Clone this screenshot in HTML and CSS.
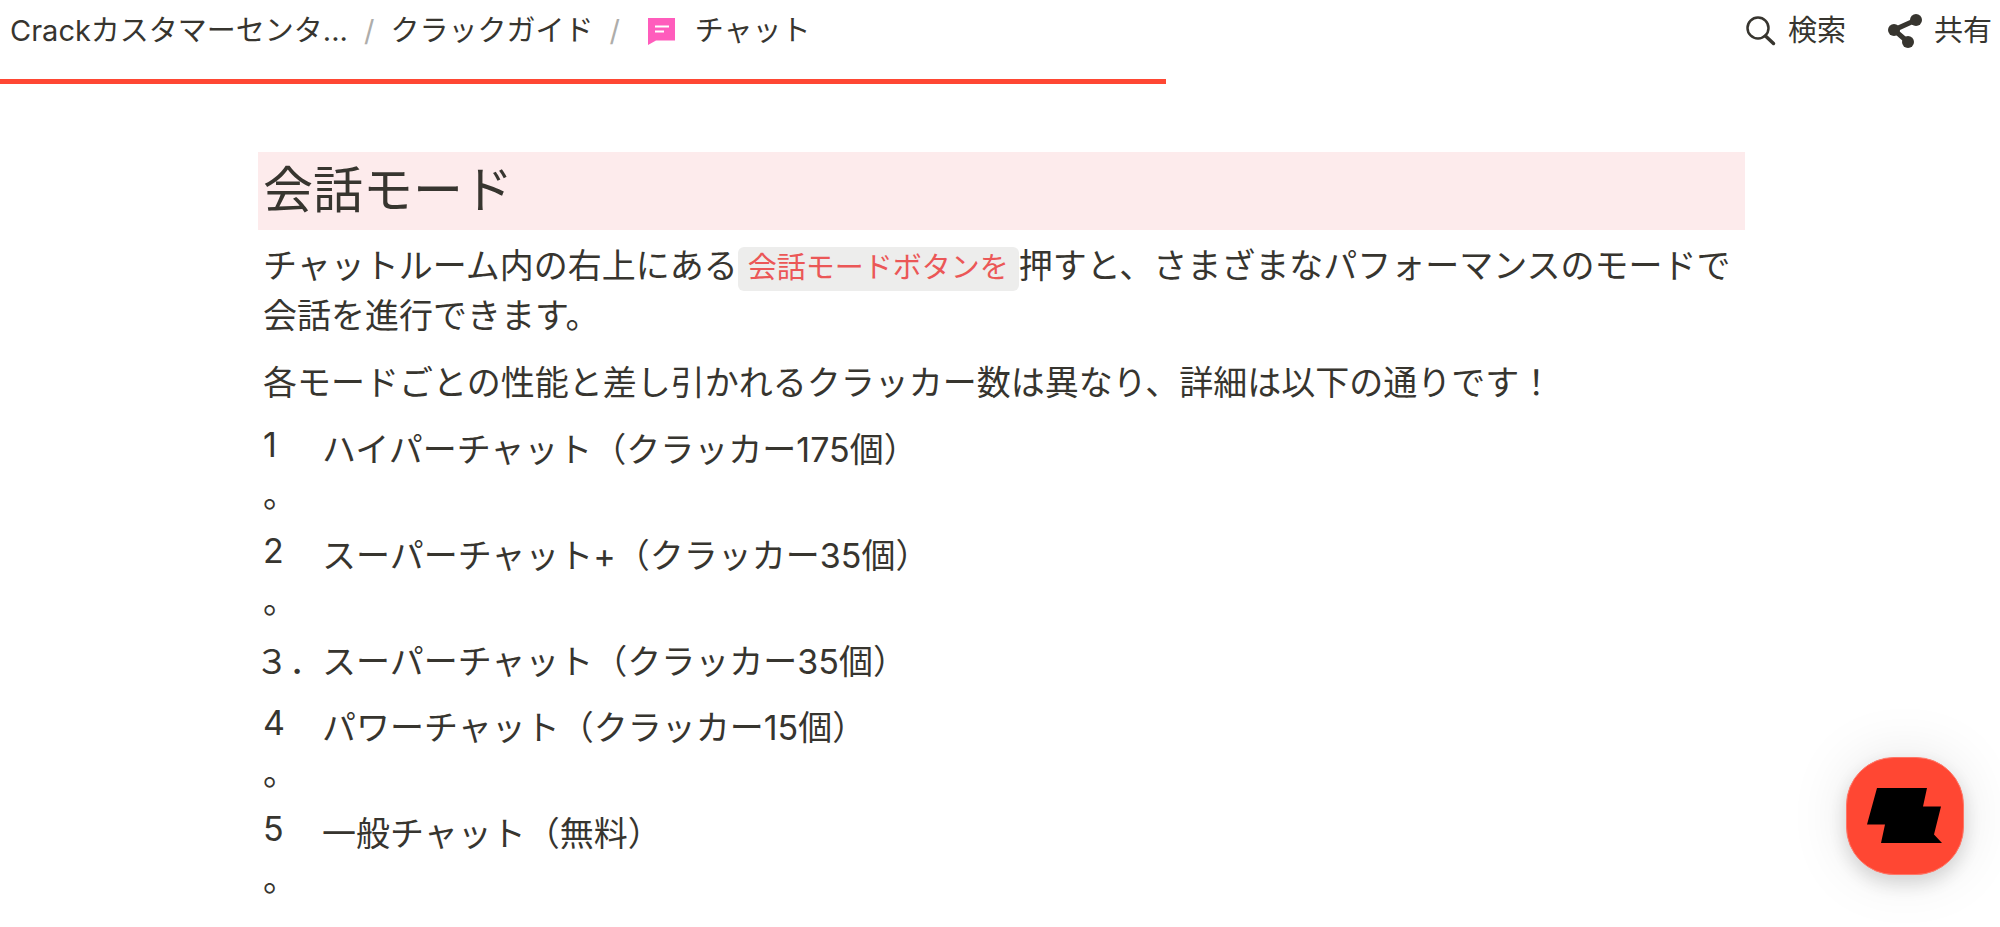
FILE: index.html
```html
<!DOCTYPE html>
<html lang="ja">
<head>
    <meta charset="UTF-8">
    <meta name="viewport" content="width=device-width, initial-scale=1">
    <title>チャット</title>
    <link rel="stylesheet" href="styles.css">
</head>
<body>
    <header class="topbar">
        <nav class="breadcrumb">
            <a href="#">Crackカスタマーセンタ...</a>
            <span class="slash">/</span>
            <a href="#">クラックガイド</a>
            <span class="slash">/</span>
            <a href="#" class="current">
                <svg class="icon-chat" viewBox="0 0 27 27"><path d="M0 0H27V22.500H8L0 27Z" fill="#ff5cbc"/><path d="M7 8.500H21M7 13.500H16" stroke="#fff" stroke-width="2"/></svg>
                チャット
            </a>
        </nav>
        <div class="actions">
            <button type="button">
                <svg class="icon-search" viewBox="0 0 30 30"><circle cx="12" cy="12" r="10.500" fill="none" stroke="#37352f" stroke-width="2.500"/><path d="M19.500 20L27.500 27.500" stroke="#37352f" stroke-width="3.500" stroke-linecap="round"/></svg>
                検索
            </button>
            <button type="button">
                <svg class="icon-share" viewBox="0 0 34 34"><path d="M28 6L6 16L20 28" fill="none" stroke="#37352f" stroke-width="5"/><g fill="#37352f"><circle cx="28" cy="6" r="6"/><circle cx="6" cy="16" r="6"/><circle cx="20" cy="28" r="6"/></g></svg>
                共有
            </button>
        </div>
    </header>
    <div class="progress"></div>

    <main class="content">
        <h2>会話モード</h2>
        <p>チャットルーム内の右上にある<code>会話モードボタンを</code>押すと、さまざまなパフォーマンスのモードで会話を進行できます。</p>
        <p>各モードごとの性能と差し引かれるクラッカー数は異なり、詳細は以下の通りです！</p>
        <ul class="modes">
            <li><span class="num">1<br>。</span><span class="mode">ハイパーチャット（クラッカー175個）</span></li>
            <li><span class="num">2<br>。</span><span class="mode">スーパーチャット+（クラッカー35個）</span></li>
            <li><span class="num wide">３．</span><span class="mode">スーパーチャット（クラッカー35個）</span></li>
            <li><span class="num">4<br>。</span><span class="mode">パワーチャット（クラッカー15個）</span></li>
            <li><span class="num">5<br>。</span><span class="mode">一般チャット（無料）</span></li>
        </ul>
    </main>

    <button type="button" class="chat-button" aria-label="チャット">
        <svg viewBox="0 0 76 56"><path d="M10 0H60L56 18.500H74L67 46.500L75 55H14L18 36.500H0Z"/></svg>
    </button>
</body>
</html>
```
FILE: styles.css
```css
* { box-sizing: border-box; }
body { margin: 0; background: #fff; color: #37352f; font-family: Inter, "Noto Sans CJK JP", sans-serif; }
a { color: inherit; text-decoration: none; }
button { padding: 0; border: none; background: none; color: inherit; font: inherit; cursor: pointer; }

.topbar { display: flex; justify-content: space-between; align-items: center; height: 62px; padding: 0 8px 0 10px; font-size: 29px; line-height: 40px; }
.breadcrumb { display: flex; gap: 16px; }
.slash { color: #aeadaa; }
.current { display: flex; align-items: center; gap: 20px; padding-left: 12px; }
.icon-chat { width: 27px; height: 27px; }
.actions { display: flex; gap: 42px; }
.actions button { display: flex; align-items: center; gap: 12px; }
.icon-search { width: 30px; height: 30px; }
.icon-share { width: 34px; height: 34px; }

.progress { width: 58.3%; height: 5px; margin-top: 17px; background: #ff4733; }

.content { margin-top: 68px; padding: 0 255px 0 258px; }
h2 { margin: 0 0 6px; padding: 3px 5px 5px; background: #fdebec; font-size: 50px; font-weight: 400; line-height: 70px; }
p { margin: 0 0 7px; padding: 5px; font-size: 34px; line-height: 50px; }
code { padding: 3px 10px 6px; border-radius: 6px; background: #ededec; color: #eb5757; font-family: inherit; font-size: 29px; line-height: 1; }

.modes { margin: 0; padding: 0 5px; list-style: none; font-size: 34px; line-height: 50px; }
.modes li { display: flex; margin-bottom: 6px; }
.num { flex: none; width: 59px; }
.wide { width: 67px; margin-left: -8px; padding-top: 5px; white-space: nowrap; }
.mode { padding: 5px 0; }

.chat-button { position: fixed; right: 36px; bottom: 52px; display: flex; align-items: center; justify-content: center; width: 118px; height: 118px; border: 1px solid #ff7566; border-radius: 48px; background: #ff4733; box-shadow: 0 8px 20px rgba(0, 0, 0, 0.15), 0 0 60px rgba(0, 0, 0, 0.1); }
.chat-button svg { width: 76px; height: 56px; }
```
